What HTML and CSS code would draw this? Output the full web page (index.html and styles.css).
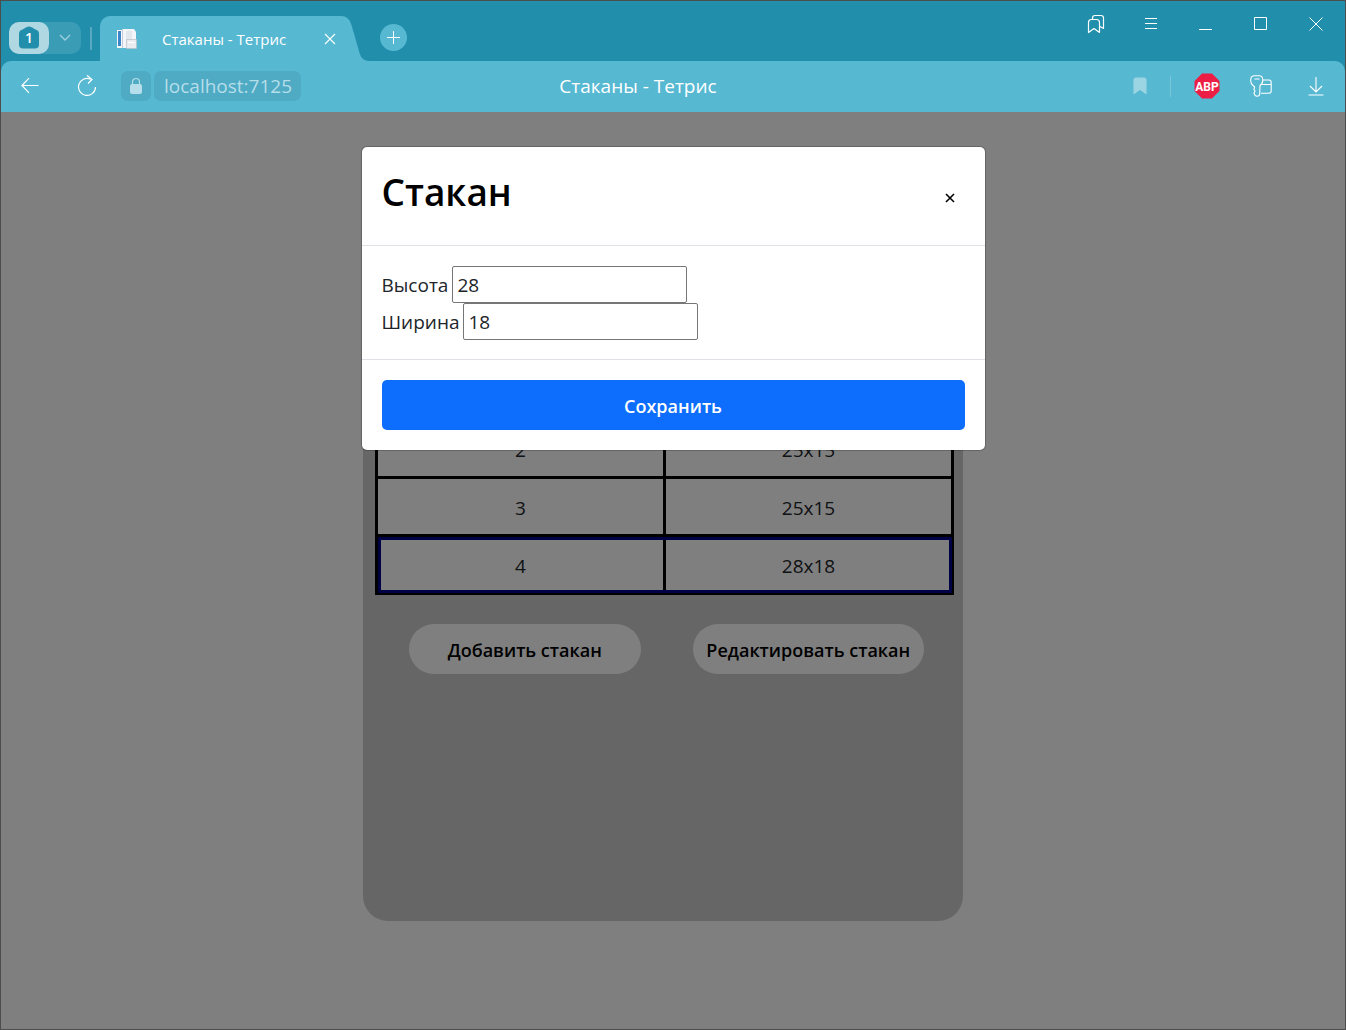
FILE: index.html
```html
<!DOCTYPE html>
<html lang="ru">
<head>
<meta charset="utf-8">
<title>Стаканы - Тетрис</title>
<link rel="stylesheet" href="styles.css">
</head>
<body>
<div class="window">
  <header class="chrome">
    <div class="tabbar">
      <div class="tab-group">
        <button class="group-count" aria-label="Группа вкладок"><svg width="22" height="24" viewBox="0 0 22 24"><path d="M8.500 1.200q2.500-1.300 5 0l5.500 3q2 1.100 2 3.300v11q0 4-4 4H5q-4 0-4-4v-11q0-2.200 2-3.300z" fill="#218fac"/></svg><span class="count">1</span></button>
        <button class="group-more" aria-label="Список групп"><svg width="12" height="8" viewBox="0 0 12 8"><path d="M1 1l5 5 5-5" fill="none" stroke="#9dd0de" stroke-width="1.300"/></svg></button>
      </div>
      <span class="tab-sep"></span>
      <div class="tab">
        <svg class="favicon" width="22" height="22" viewBox="0 0 22 22"><path d="M0 2h7v18H0z" fill="#f6f7fa"/><path d="M1 3h3v15H1z" fill="#3b86c8"/><path d="M5 1h12l2 3v16H5z" fill="#f4f5f8"/><path d="M5.500 1v19" stroke="#c3ccd8"/><path d="M9 3h6v12H9z" fill="#e2e6ed"/><path d="M9.500 11.500h10v9h-10z" fill="#e9ebef" stroke="#b9c0c8" stroke-width=".7"/><path d="M11 14.500h7" stroke="#fff"/></svg>
        <span class="tab-title">Стаканы - Тетрис</span>
        <button class="icon-btn tab-close" aria-label="Закрыть вкладку"><svg width="12" height="12" viewBox="0 0 12 12"><path d="M1 1l10 10M11 1L1 11" stroke="#fff" stroke-width="1.100"/></svg></button>
      </div>
      <svg class="tab-edge" width="28" height="45" viewBox="0 0 28 45"><path d="M0 0q8 0 10.500 9l8 28q2.300 8 9.500 8H0z" fill="#57b8d2"/></svg>
      <button class="new-tab" aria-label="Новая вкладка"><svg width="13" height="13" viewBox="0 0 13 13"><path d="M6.500 0v13M0 6.500h13" stroke="#fff"/></svg></button>
      <div class="window-controls">
        <button class="icon-btn" aria-label="Коллекции"><svg width="18" height="20" viewBox="0 0 18 20"><path d="M1.500 18.500v-10q0-3 3-3h5q3 0 3 3v10L7 14.500zM5.500 5V4q0-2.500 2.500-2.500h6q2.500 0 2.500 2.500v10.500l-3.500-2" fill="none" stroke="#fff" stroke-width="1.200" stroke-linejoin="round"/></svg></button>
        <button class="icon-btn" aria-label="Меню"><svg width="12" height="12" viewBox="0 0 12 12"><path d="M0 .5h12M0 5.500h12M0 10.500h12" stroke="#fff"/></svg></button>
        <button class="icon-btn" aria-label="Свернуть"><svg width="14" height="14" viewBox="0 0 14 14"><path d="M0 12.500h13" stroke="#fff"/></svg></button>
        <button class="icon-btn" aria-label="Развернуть"><svg width="14" height="14" viewBox="0 0 14 14"><path d="M.5 .5h12v12H.5z" fill="none" stroke="#fff"/></svg></button>
        <button class="icon-btn" aria-label="Закрыть"><svg width="14" height="14" viewBox="0 0 14 14"><path d="M.5 .5l13 13M13.500 .5l-13 13" stroke="#fff"/></svg></button>
      </div>
    </div>
    <div class="toolbar">
      <div class="toolbar-left">
        <button class="icon-btn back" aria-label="Назад"><svg width="18" height="16" viewBox="0 0 18 16"><path d="M17.500 7.500H1M8 .2L.9 7.500 8 14.800" fill="none" stroke="#fff" stroke-width="1.200"/></svg></button>
        <button class="icon-btn reload" aria-label="Обновить"><svg width="20" height="22" viewBox="0 0 20 22"><path d="M18.500 12A8.500 8.500 0 1 1 13.500 4.200M10 .3L15 4.500 11 8.500" fill="none" stroke="#fff" stroke-width="1.200"/></svg></button>
        <button class="lock" aria-label="Защита"><svg width="14" height="18" viewBox="0 0 14 18"><path d="M3.500 8V5a3.500 3.500 0 0 1 7 0v3" fill="none" stroke="#b5deea" stroke-width="1.200"/><rect x="1" y="7" width="12" height="10" rx="2" fill="#b5deea"/></svg></button>
        <a class="address" href="#">localhost:7125</a>
      </div>
      <span class="page-title">Стаканы - Тетрис</span>
      <div class="toolbar-right">
        <button class="icon-btn bookmark" aria-label="В закладки"><svg width="14" height="18" viewBox="0 0 14 18"><path d="M.5 17.500V3q0-2.500 2.500-2.500h8q2.500 0 2.500 2.500v14.500L7 13z" fill="#9bd5e4"/></svg></button>
        <span class="tool-sep"></span>
        <button class="abp" aria-label="Adblock Plus"><svg width="26" height="26" viewBox="0 0 26 26"><path d="M8 .5h10L25.500 8v10L18 25.500H8L.5 18V8z" fill="#ed1e45"/><text x="13" y="18" text-anchor="middle" class="abp-text">ABP</text></svg></button>
        <button class="icon-btn keys" aria-label="Пароли"><svg width="22" height="22" viewBox="0 0 22 22"><path d="M3 10.500Q.2 8.500.8 4.500 1 .8 4.500.8h4.500q3.500 0 3.700 3.700.4 4-2.700 6l-.3 8.500q-.2 2.200-2.500 2.200Q4.500 21.200 4 18l1-2-1-1.500.6-2.500zM4.500 4h5M13 5h6q2.200 0 2.200 2.500v8.500q0 2.200-2.200 2.200h-8M12 9.500h9" fill="none" stroke="#fff" stroke-width="1.100" stroke-linejoin="round"/></svg></button>
        <button class="icon-btn" aria-label="Загрузки"><svg width="16" height="20" viewBox="0 0 16 20"><path d="M8 1v15M2 10l6 6 6-6M.5 19h15" fill="none" stroke="#fff" stroke-width="1.100"/></svg></button>
      </div>
    </div>
  </header>

  <main class="viewport">
    <section class="card">
      <table class="cups">
        <tbody>
          <tr><td>2</td><td>25x15</td></tr>
          <tr><td>3</td><td>25x15</td></tr>
          <tr class="selected"><td>4</td><td>28x18</td></tr>
        </tbody>
      </table>
      <div class="actions">
        <button class="pill">Добавить стакан</button>
        <button class="pill">Редактировать стакан</button>
      </div>
    </section>

    <div class="backdrop">
      <form class="modal" role="dialog" aria-labelledby="modal-title">
        <div class="modal-header">
          <h1 id="modal-title">Стакан</h1>
          <button type="button" class="modal-close" aria-label="Закрыть"><svg width="10" height="10" viewBox="0 0 10 10"><path d="M1 1l8 8M9 1L1 9" stroke="#000" stroke-width="1.600"/></svg></button>
        </div>
        <div class="modal-body">
          <div class="field"><label for="height">Высота</label><input id="height" type="text" value="28"></div>
          <div class="field"><label for="width">Ширина</label><input id="width" type="text" value="18"></div>
        </div>
        <div class="modal-footer">
          <button type="button" class="save">Сохранить</button>
        </div>
      </form>
    </div>
  </main>
</div>
</body>
</html>
```
FILE: styles.css
```css
* { box-sizing: border-box; }

body {
  margin: 0;
  font-family: "Segoe UI", "Open Sans", "Noto Sans", sans-serif;
  font-size: 19px;
  line-height: 28px;
  color: #212529;
}

button {
  margin: 0;
  padding: 0;
  border: 0;
  background: none;
  font: inherit;
  color: inherit;
}

svg { display: block; }

.window {
  display: flex;
  flex-direction: column;
  min-height: 100vh;
  border: 1px solid #4d4d4d;
  background: #218fac;
}

/* Browser frame */
.tabbar {
  display: flex;
  align-items: flex-end;
  height: 60px;
  padding-left: 8px;
}

.tab-group {
  display: flex;
  width: 72px;
  height: 32px;
  margin-bottom: 7px;
  border-radius: 10px;
  background: #3b9cb6;
}

.group-count {
  display: grid;
  place-items: center;
  width: 40px;
  border-radius: 10px;
  background: #b0d8e3;
}

.group-count > * { grid-area: 1 / 1; }

.count {
  font-size: 14px;
  font-weight: 600;
  line-height: 20px;
  color: #fff;
}

.group-more {
  display: grid;
  place-items: center;
  flex: 1;
}

.tab-sep {
  width: 2px;
  height: 23px;
  margin: 0 8px 11px 9px;
  background: #58a9bf;
}

.tab {
  display: flex;
  align-items: center;
  width: 241px;
  height: 45px;
  padding-left: 17px;
  border-radius: 10px 0 0 0;
  background: #57b8d2;
}

.tab-title {
  flex: 1;
  margin-left: 23px;
  font-size: 15px;
  line-height: 20px;
  color: #fff;
  white-space: nowrap;
}

.icon-btn {
  display: grid;
  place-items: center;
}

.tab-close { width: 22px; }

.new-tab {
  display: grid;
  place-items: center;
  width: 27px;
  height: 27px;
  margin: 0 0 10px 11px;
  border-radius: 50%;
  background: #57b8d2;
}

.window-controls {
  display: flex;
  align-self: flex-start;
  margin-left: auto;
  padding-right: 2px;
}

.window-controls .icon-btn {
  width: 55px;
  height: 46px;
}

.toolbar {
  display: grid;
  grid-template-columns: 1fr auto 1fr;
  align-items: center;
  height: 51px;
  padding-bottom: 1px;
  border-radius: 10px 10px 0 0;
  background: #57b8d2;
}

.toolbar-left,
.toolbar-right {
  display: flex;
  align-items: center;
}

.toolbar-left { padding-left: 20px; }

.reload { margin-left: 38px; }

.lock {
  display: grid;
  place-items: center;
  width: 30px;
  height: 30px;
  margin-left: 24px;
  border-radius: 7px;
  background: #4faac4;
}

.address {
  height: 30px;
  margin-left: 3px;
  padding: 0 9px 0 10px;
  border-radius: 7px;
  background: #4faac4;
  line-height: 30px;
  color: #b5deea;
  text-decoration: none;
}

.page-title {
  padding-right: 70px;
  color: #fff;
}

.toolbar-right {
  justify-content: flex-end;
  padding-right: 21px;
}

.tool-sep {
  width: 1px;
  height: 21px;
  margin: 0 23px;
  background: #79c6db;
}

.keys { margin: 0 36px 0 30px; }

.abp-text {
  font-family: Roboto, sans-serif;
  font-size: 12px;
  font-weight: 700;
  fill: #fff;
}

/* Page */
.viewport {
  position: relative;
  flex: 1;
  padding: 306px 20px 108px 0;
  background: #fff;
}

.card {
  width: 600px;
  height: 503px;
  max-width: 100%;
  margin: 0 auto;
  padding: 0 9px 0 12px;
  border-radius: 25px;
  background: #ccc;
}

.cups {
  width: 100%;
  table-layout: fixed;
  border-collapse: collapse;
  text-align: center;
}

.cups td {
  height: 58px;
  padding: 2px 0 0;
  border: 3px solid #000;
  background: #fff;
}

.selected {
  outline: 3px solid #00008b;
  outline-offset: -4px;
}

.actions {
  display: grid;
  grid-template-columns: 1fr 1fr;
  gap: 52px;
  padding: 29px 30px 0 34px;
}

.pill {
  height: 50px;
  padding-top: 2px;
  border-radius: 25px;
  background: #fff;
  font-size: 18px;
  font-weight: 600;
  color: #000;
  white-space: nowrap;
}

/* Dialog */
.backdrop {
  position: absolute;
  inset: 0;
  display: flex;
  justify-content: center;
  align-items: flex-start;
  padding-top: 34px;
  background: rgba(0, 0, 0, .5);
}

.modal {
  width: 625px;
  border: 1px solid rgba(0, 0, 0, .2);
  border-radius: 6px;
  background: #fff;
  background-clip: padding-box;
}

.modal-header {
  display: flex;
  justify-content: space-between;
  padding: 20px;
  border-bottom: 1px solid #dee2e6;
}

h1 {
  margin: 0;
  font-size: 37px;
  font-weight: 600;
  line-height: 50px;
  color: #000;
}

.modal-close {
  display: grid;
  place-items: center;
  width: 30px;
  height: 58px;
  padding-top: 4px;
}

.modal-body { padding: 20px 20px 19px; }

.field {
  display: flex;
  align-items: center;
  gap: 4px;
}

.field input {
  width: 235px;
  height: 37px;
  padding: 0 4px;
  border: 1px solid #767676;
  border-radius: 2px;
  background: #fff;
  font: inherit;
  color: #212529;
}

.modal-footer {
  padding: 20px;
  border-top: 1px solid #dee2e6;
}

.save {
  width: 100%;
  height: 50px;
  padding-top: 2px;
  border-radius: 5px;
  background: #0d6efd;
  font-size: 18px;
  font-weight: 600;
  color: #fff;
}
```
